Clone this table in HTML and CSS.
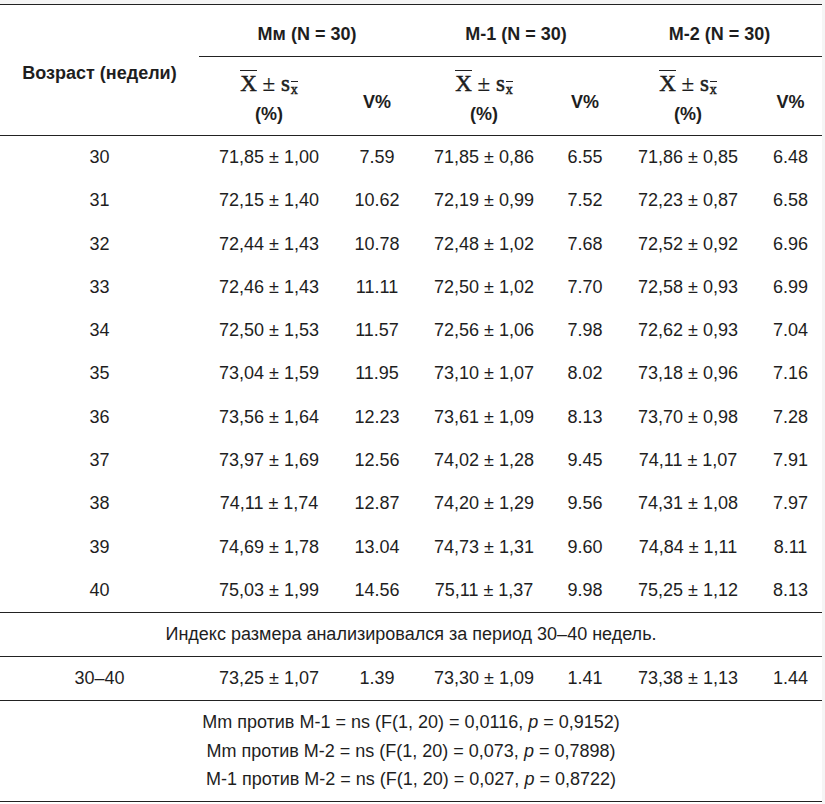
FILE: index.html
```html
<!DOCTYPE html>
<html lang="ru">
<head>
<meta charset="utf-8">
<link rel="stylesheet" href="styles.css">
</head>
<body>
<div class="wrap">
<table class="data">
  <colgroup>
    <col class="c-age"><col class="c-x1"><col class="c-v1"><col class="c-x2"><col class="c-v2"><col class="c-x3"><col class="c-v3">
  </colgroup>
  <thead>
    <tr>
      <th rowspan="2" class="age">Возраст (недели)</th>
      <th colspan="2" class="grp">Мм (N = 30)</th>
      <th colspan="2" class="grp">М-1 (N = 30)</th>
      <th colspan="2" class="grp">М-2 (N = 30)</th>
    </tr>
    <tr>
      <th class="fx"><div class="formula"><span class="xbar">X</span> <span class="pm">±</span> <span class="s">s</span><sub class="sub"><span class="xbar small">x</span></sub></div><div class="pct">(%)</div></th>
      <th class="vp">V%</th>
      <th class="fx"><div class="formula"><span class="xbar">X</span> <span class="pm">±</span> <span class="s">s</span><sub class="sub"><span class="xbar small">x</span></sub></div><div class="pct">(%)</div></th>
      <th class="vp">V%</th>
      <th class="fx"><div class="formula"><span class="xbar">X</span> <span class="pm">±</span> <span class="s">s</span><sub class="sub"><span class="xbar small">x</span></sub></div><div class="pct">(%)</div></th>
      <th class="vp">V%</th>
    </tr>
  </thead>
  <tbody>
    <tr><td>30</td><td>71,85 ± 1,00</td><td>7.59</td><td>71,85 ± 0,86</td><td>6.55</td><td>71,86 ± 0,85</td><td>6.48</td></tr>
    <tr><td>31</td><td>72,15 ± 1,40</td><td>10.62</td><td>72,19 ± 0,99</td><td>7.52</td><td>72,23 ± 0,87</td><td>6.58</td></tr>
    <tr><td>32</td><td>72,44 ± 1,43</td><td>10.78</td><td>72,48 ± 1,02</td><td>7.68</td><td>72,52 ± 0,92</td><td>6.96</td></tr>
    <tr><td>33</td><td>72,46 ± 1,43</td><td>11.11</td><td>72,50 ± 1,02</td><td>7.70</td><td>72,58 ± 0,93</td><td>6.99</td></tr>
    <tr><td>34</td><td>72,50 ± 1,53</td><td>11.57</td><td>72,56 ± 1,06</td><td>7.98</td><td>72,62 ± 0,93</td><td>7.04</td></tr>
    <tr><td>35</td><td>73,04 ± 1,59</td><td>11.95</td><td>73,10 ± 1,07</td><td>8.02</td><td>73,18 ± 0,96</td><td>7.16</td></tr>
    <tr><td>36</td><td>73,56 ± 1,64</td><td>12.23</td><td>73,61 ± 1,09</td><td>8.13</td><td>73,70 ± 0,98</td><td>7.28</td></tr>
    <tr><td>37</td><td>73,97 ± 1,69</td><td>12.56</td><td>74,02 ± 1,28</td><td>9.45</td><td>74,11 ± 1,07</td><td>7.91</td></tr>
    <tr><td>38</td><td>74,11 ± 1,74</td><td>12.87</td><td>74,20 ± 1,29</td><td>9.56</td><td>74,31 ± 1,08</td><td>7.97</td></tr>
    <tr><td>39</td><td>74,69 ± 1,78</td><td>13.04</td><td>74,73 ± 1,31</td><td>9.60</td><td>74,84 ± 1,11</td><td>8.11</td></tr>
    <tr><td>40</td><td>75,03 ± 1,99</td><td>14.56</td><td>75,11 ± 1,37</td><td>9.98</td><td>75,25 ± 1,12</td><td>8.13</td></tr>
    <tr class="note"><td colspan="7">Индекс размера анализировался за период 30–40 недель.</td></tr>
    <tr class="total"><td>30–40</td><td>73,25 ± 1,07</td><td>1.39</td><td>73,30 ± 1,09</td><td>1.41</td><td>73,38 ± 1,13</td><td>1.44</td></tr>
    <tr class="foot"><td colspan="7">
      <div>Mm против M-1 = ns (F(1, 20) = 0,0116, <i>p</i> = 0,9152)</div>
      <div>Mm против M-2 = ns (F(1, 20) = 0,073, <i>p</i> = 0,7898)</div>
      <div>M-1 против M-2 = ns (F(1, 20) = 0,027, <i>p</i> = 0,8722)</div>
    </td></tr>
  </tbody>
</table>
</div>
</body>
</html>
```

FILE: styles.css
```css
html, body {
  margin: 0;
  padding: 0;
  background: #f5f5f5;
}
body {
  padding-top: 4px;
  font-family: "Liberation Sans", Arial, sans-serif;
  font-size: 18px;
  color: #1e1e1e;
}
.wrap {
  width: 822px;
  height: 800px;
  background: #fff;
}
.data {
  width: 822px;
  table-layout: fixed;
  border-collapse: separate;
  border-spacing: 0;
}
.c-age { width: 199px; }
.c-x1 { width: 140px; }
.c-v1 { width: 76px; }
.c-x2 { width: 138px; }
.c-v2 { width: 64px; }
.c-x3 { width: 142px; }
.c-v3 { width: 63px; }

th, td {
  text-align: center;
  padding: 0 4px;
}
th {
  font-weight: bold;
  line-height: 23.4px;
}
th.age {
  border-top: 1px solid #222;
  border-bottom: 1px solid #222;
  padding-top: 18px;
  padding-bottom: 10px;
  vertical-align: middle;
}
th.grp {
  border-top: 1px solid #222;
  border-bottom: 1px solid #222;
  padding-top: 18px;
  padding-bottom: 9.6px;
}
th.fx {
  border-bottom: 1px solid #222;
  padding-top: 10px;
  padding-bottom: 8px;
  vertical-align: top;
}
th.vp {
  border-bottom: 1px solid #222;
  padding-top: 24px;
  padding-bottom: 10px;
  vertical-align: middle;
}
.formula {
  height: 34px;
  line-height: 34px;
  font-family: "Liberation Serif", "Times New Roman", serif;
  font-weight: normal;
  font-size: 23px;
  color: #1e1e1e;
  -webkit-text-stroke: 0.5px #1e1e1e;
  white-space: nowrap;
}
.xbar {
  display: inline-block;
  line-height: 1;
  border-top: 1.5px solid #222;
  padding-top: 1px;
}
.xbar.small {
  border-top-width: 1px;
  padding-top: 1px;
}
.pm {
  font-size: 23px;
  -webkit-text-stroke: 0.2px #1e1e1e;
}
.sub {
  font-size: 14px;
  vertical-align: -3px;
  margin-left: 1px;
}
.pct {
  line-height: 26px;
}
td {
  padding-top: 10px;
  padding-bottom: 10px;
  line-height: 23.3px;
}
tr.note td {
  border-top: 1px solid #222;
  border-bottom: 1px solid #222;
  padding-top: 10px;
  padding-bottom: 10px;
  line-height: 23px;
}
tr.total td {
  border-bottom: 1px solid #222;
  padding-top: 10px;
  padding-bottom: 10px;
  line-height: 23px;
}
tr.foot td {
  border-bottom: 1px solid #222;
  padding-top: 7px;
  padding-bottom: 7px;
  line-height: 28.5px;
}
```
